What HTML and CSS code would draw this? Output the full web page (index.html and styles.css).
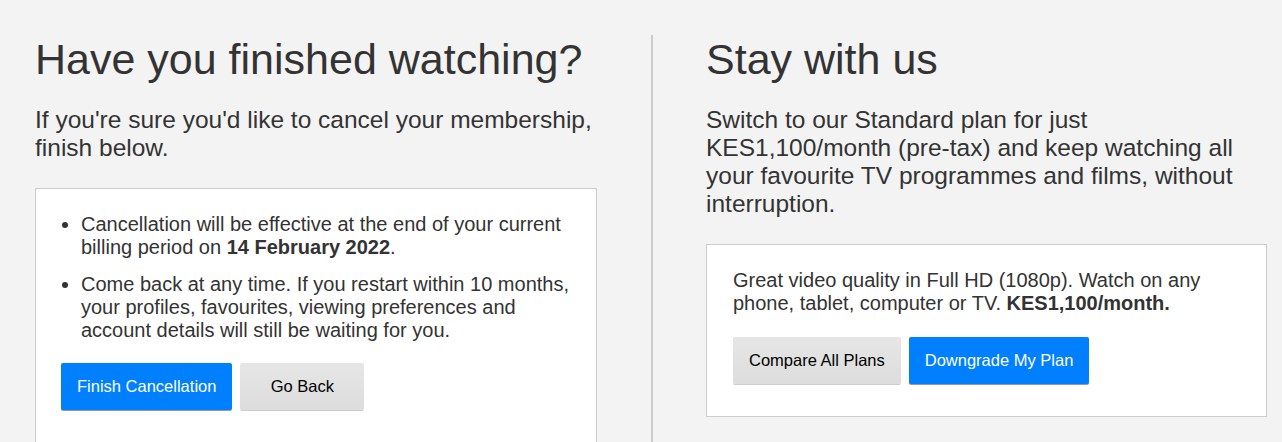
FILE: index.html
```html
<!DOCTYPE html>
<html lang="en">
<head>
<meta charset="utf-8">
<title>Cancel membership</title>
<link rel="stylesheet" href="styles.css">
</head>
<body>
<div class="page">
  <section class="col col-left">
    <h1 class="title">Have you finished watching?</h1>
    <p class="lead">If you're sure you'd like to cancel your membership, finish below.</p>
    <div class="card card-left">
      <ul class="points">
        <li>Cancellation will be effective at the end of your current billing period on <strong>14 February 2022</strong>.</li>
        <li>Come back at any time. If you restart within 10 months, your profiles, favourites, viewing preferences and account details will still be waiting for you.</li>
      </ul>
      <div class="actions">
        <button class="btn btn-blue">Finish Cancellation</button>
        <button class="btn btn-grey btn-min">Go Back</button>
      </div>
    </div>
  </section>
  <section class="col col-right">
    <h1 class="title">Stay with us</h1>
    <p class="lead">Switch to our Standard plan for just KES1,100/month (pre-tax) and keep watching all your favourite TV programmes and films, without interruption.</p>
    <div class="card card-right">
      <p class="plan">Great video quality in Full HD (1080p). Watch on any phone, tablet, computer or TV. <strong>KES1,100/month.</strong></p>
      <div class="actions">
        <button class="btn btn-grey">Compare All Plans</button>
        <button class="btn btn-blue">Downgrade My Plan</button>
      </div>
    </div>
  </section>
</div>
</body>
</html>
```
FILE: styles.css
```css
html, body {
  margin: 0;
  padding: 0;
  background: #f3f3f3;
  overflow: hidden;
}
body {
  font-family: "Liberation Sans", Arial, sans-serif;
  color: #333;
}
.page {
  display: flex;
  align-items: flex-start;
  padding: 35px 0 0 35px;
}
.col-left {
  width: 562px;
  flex: none;
  margin-right: 54px;
}
.col-right {
  width: 561px;
  flex: none;
  border-left: 2px solid #cccccc;
  padding-left: 53px;
  min-height: 420px;
}
.title {
  margin: 0;
  font-size: 43px;
  font-weight: normal;
  line-height: 1.15;
}
.lead {
  margin: 22px 0 25.5px;
  font-size: 24.5px;
  line-height: 28px;
}
.card {
  background: #fff;
  border: 1px solid #cccccc;
  box-sizing: border-box;
}
.card-left {
  padding: 24px 25px 60px;
}
.card-right {
  padding: 24px 25px 32px 26px;
}
.points {
  margin: 0 0 21px;
  padding-left: 20px;
  font-size: 20px;
  line-height: 23px;
}
.points li + li {
  margin-top: 14px;
}
.plan {
  margin: 0 0 22px;
  font-size: 20px;
  line-height: 23px;
}
.actions {
  display: flex;
  gap: 8px;
}
.btn {
  height: 47px;
  padding: 0 16px;
  border: none;
  border-radius: 2px;
  font-family: "Liberation Sans", Arial, sans-serif;
  font-size: 16.5px;
  cursor: pointer;
  box-sizing: border-box;
}
.btn-blue {
  background: #0080ff;
  color: #fff;
  box-shadow: 0 1px 0 rgba(0, 0, 0, 0.4);
}
.btn-grey {
  background: linear-gradient(#e6e6e6, #dddddd);
  color: #000;
  box-shadow: 0 1px 0 rgba(0, 0, 0, 0.2);
}
.btn-min {
  min-width: 124px;
}
```
